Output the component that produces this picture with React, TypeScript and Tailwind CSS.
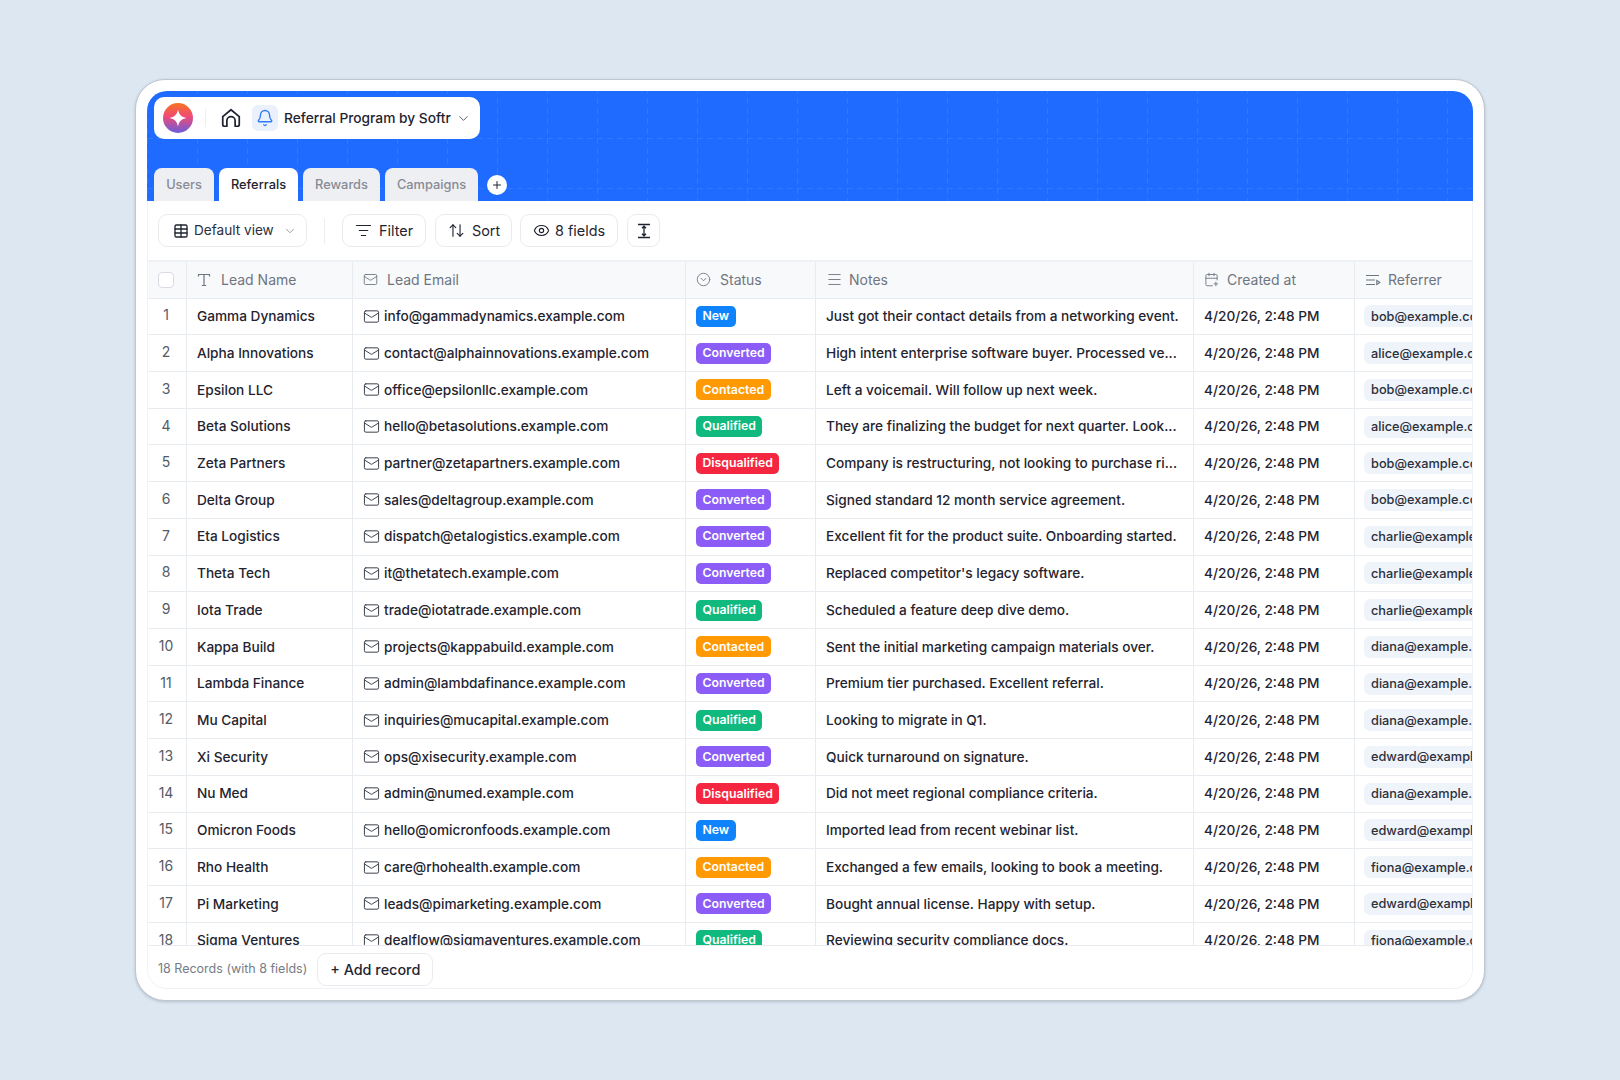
import {
  ArrowUpDown,
  Bell,
  CalendarPlus,
  ChevronDown,
  CircleChevronDown,
  Eye,
  ListFilter,
  Mail,
  Menu,
  Plus,
  Table,
} from "lucide-react";

type Status = "New" | "Converted" | "Contacted" | "Qualified" | "Disqualified";

const statusColors: Record<Status, string> = {
  New: "bg-[#0f83fb]",
  Converted: "bg-[#8b5cf6]",
  Contacted: "bg-[#ff9a05]",
  Qualified: "bg-[#10b97d]",
  Disqualified: "bg-[#f5263f]",
};

const rows: { name: string; email: string; status: Status; notes: string; referrer: string }[] = [
  { name: "Gamma Dynamics", email: "info@gammadynamics.example.com", status: "New", notes: "Just got their contact details from a networking event.", referrer: "bob@example.com" },
  { name: "Alpha Innovations", email: "contact@alphainnovations.example.com", status: "Converted", notes: "High intent enterprise software buyer. Processed ve...", referrer: "alice@example.com" },
  { name: "Epsilon LLC", email: "office@epsilonllc.example.com", status: "Contacted", notes: "Left a voicemail. Will follow up next week.", referrer: "bob@example.com" },
  { name: "Beta Solutions", email: "hello@betasolutions.example.com", status: "Qualified", notes: "They are finalizing the budget for next quarter. Look...", referrer: "alice@example.com" },
  { name: "Zeta Partners", email: "partner@zetapartners.example.com", status: "Disqualified", notes: "Company is restructuring, not looking to purchase ri...", referrer: "bob@example.com" },
  { name: "Delta Group", email: "sales@deltagroup.example.com", status: "Converted", notes: "Signed standard 12 month service agreement.", referrer: "bob@example.com" },
  { name: "Eta Logistics", email: "dispatch@etalogistics.example.com", status: "Converted", notes: "Excellent fit for the product suite. Onboarding started.", referrer: "charlie@example.com" },
  { name: "Theta Tech", email: "it@thetatech.example.com", status: "Converted", notes: "Replaced competitor's legacy software.", referrer: "charlie@example.com" },
  { name: "Iota Trade", email: "trade@iotatrade.example.com", status: "Qualified", notes: "Scheduled a feature deep dive demo.", referrer: "charlie@example.com" },
  { name: "Kappa Build", email: "projects@kappabuild.example.com", status: "Contacted", notes: "Sent the initial marketing campaign materials over.", referrer: "diana@example.com" },
  { name: "Lambda Finance", email: "admin@lambdafinance.example.com", status: "Converted", notes: "Premium tier purchased. Excellent referral.", referrer: "diana@example.com" },
  { name: "Mu Capital", email: "inquiries@mucapital.example.com", status: "Qualified", notes: "Looking to migrate in Q1.", referrer: "diana@example.com" },
  { name: "Xi Security", email: "ops@xisecurity.example.com", status: "Converted", notes: "Quick turnaround on signature.", referrer: "edward@example.com" },
  { name: "Nu Med", email: "admin@numed.example.com", status: "Disqualified", notes: "Did not meet regional compliance criteria.", referrer: "diana@example.com" },
  { name: "Omicron Foods", email: "hello@omicronfoods.example.com", status: "New", notes: "Imported lead from recent webinar list.", referrer: "edward@example.com" },
  { name: "Rho Health", email: "care@rhohealth.example.com", status: "Contacted", notes: "Exchanged a few emails, looking to book a meeting.", referrer: "fiona@example.com" },
  { name: "Pi Marketing", email: "leads@pimarketing.example.com", status: "Converted", notes: "Bought annual license. Happy with setup.", referrer: "edward@example.com" },
  { name: "Sigma Ventures", email: "dealflow@sigmaventures.example.com", status: "Qualified", notes: "Reviewing security compliance docs.", referrer: "fiona@example.com" },
];

const cols = "grid grid-cols-[39px_166px_333px_130px_378px_161px_119px]";
const cell = "flex items-center border-r border-[#e8ebef] pl-[10px] overflow-hidden whitespace-nowrap";
const headCell = "flex items-center border-r border-[#e8ebef] pl-[10px] text-[#6f7580]";
const btn = "flex items-center h-[33px] rounded-[9px] border border-[#e9ebef] bg-white text-[#1f2430]";

function Logo() {
  return (
    <svg width="30" height="30" viewBox="0 0 30 30">
      <defs>
        <linearGradient id="logo" x1="0.5" y1="0" x2="0.5" y2="1">
          <stop offset="0" stopColor="#f9731f" />
          <stop offset="0.45" stopColor="#ef4a78" />
          <stop offset="1" stopColor="#6a5cdc" />
        </linearGradient>
      </defs>
      <circle cx="15" cy="15" r="15" fill="url(#logo)" />
      <path d="M15 6.500c.9 5 3.500 7.600 8.500 8.500-5 .9-7.600 3.500-8.500 8.500-.9-5-3.500-7.600-8.500-8.500 5-.9 7.600-3.500 8.500-8.500z" fill="#fff" />
    </svg>
  );
}

function HomeIcon() {
  return (
    <svg width="22" height="22" viewBox="0 0 24 24" fill="none" stroke="#1f2430" strokeWidth="1.900" strokeLinejoin="round" strokeLinecap="round">
      <path d="M3 10.500 12 3l9 7.500V19a2 2 0 0 1-2 2h-2.500v-6a4.500 4.500 0 0 0-9 0v6H5a2 2 0 0 1-2-2z" />
    </svg>
  );
}

function SerifT() {
  return (
    <svg width="14" height="14" viewBox="0 0 14 14" fill="none" stroke="#6f7580" strokeWidth="1.200">
      <path d="M1.500 3.500V1.500h11v2M7 1.500v11M4.800 12.500h4.400" />
    </svg>
  );
}

function ReferrerIcon() {
  return (
    <svg width="16" height="14" viewBox="0 0 16 14" fill="none" stroke="#6f7580" strokeWidth="1.100">
      <path d="M1 2.500h13M1 7h9M1 11.500h9" />
      <path d="M11.800 7.500l3 2-3 2z" />
    </svg>
  );
}

function RowHeightIcon() {
  return (
    <svg width="16" height="16" viewBox="0 0 16 16" fill="none" stroke="#1f2430" strokeWidth="1.300">
      <path d="M2 1.500h12M2 14.500h12M8 3.500v9M6 5.200l2-2 2 2M6 10.800l2 2 2-2" />
    </svg>
  );
}

function BlueGrid() {
  return (
    <svg className="absolute inset-0 w-full h-full" aria-hidden="true">
      <defs>
        <pattern id="dash" width="50" height="50" patternUnits="userSpaceOnUse" y="47">
          <path d="M0.500 0V50M0 0.500H50" stroke="#ffffff" strokeOpacity="0.08" strokeDasharray="6 4" fill="none" />
        </pattern>
      </defs>
      <rect width="100%" height="100%" fill="url(#dash)" />
    </svg>
  );
}

function Tab({ label, active, width }: { label: string; active?: boolean; width: string }) {
  return (
    <div
      className={`flex items-center justify-center h-[33px] pt-[1px] rounded-t-[8px] text-[12.800px] font-medium ${width} ${
        active ? "bg-white text-[#1f2430]" : "bg-[#eeeff3] text-[#868b95]"
      }`}
    >
      {label}
    </div>
  );
}

export default function App() {
  return (
    <div className="w-[1620px] h-[1080px] bg-[#dce7f2] pt-[79px] pl-[135px] font-['Inter',sans-serif]">
      <div className="w-[1350px] h-[922px] bg-white rounded-[30px] border border-[#bfc6cc] shadow-[0_1px_3px_rgba(60,70,90,0.25)] p-[11px] flex flex-col">
        <div className="relative h-[110px] shrink-0 bg-[#1f6bff] rounded-t-[20px] overflow-hidden flex flex-col justify-between pl-[7px] pt-[6px]">
          <BlueGrid />
          <div className="relative w-[326px] h-[42px] bg-white rounded-[10px] flex items-center pl-[9px]">
            <Logo />
            <div className="w-px h-[18px] bg-[#eceef1] ml-[12px]" />
            <div className="ml-[14px]"><HomeIcon /></div>
            <div className="ml-[10px] w-[26px] h-[26px] rounded-[6px] bg-[#eaf0fc] flex items-center justify-center">
              <Bell size={18} color="#2f7bf6" strokeWidth={1.800} />
            </div>
            <span className="ml-[6px] text-[13.750px] font-medium text-[#1f2430] whitespace-nowrap">Referral Program by Softr</span>
            <ChevronDown size={15} color="#4b5563" strokeWidth={1.500} className="ml-[5px]" />
          </div>
          <div className="relative flex items-center gap-[5px]">
            <Tab label="Users" width="w-[60px]" />
            <Tab label="Referrals" active width="w-[79px]" />
            <Tab label="Rewards" width="w-[77px]" />
            <Tab label="Campaigns" width="w-[93px]" />
            <div className="ml-[4px] mb-[-1px] w-[20px] h-[20px] rounded-full bg-white flex items-center justify-center">
              <Plus size={12} color="#1f2430" strokeWidth={2} />
            </div>
          </div>
        </div>

        <div className="flex-1 min-h-0 flex flex-col border-x border-b border-[#f0f2f6] rounded-b-[20px] overflow-hidden">
          <div className="h-[59px] shrink-0 flex items-center pl-[10px] text-[14.400px]">
            <div className={`${btn} w-[149px] pl-[14px] gap-[5px]`}>
              <Table size={16} color="#1f2430" strokeWidth={2} />
              <span className="text-[13.600px] text-[#2b303a]">Default view</span>
              <ChevronDown size={14} color="#8a8f98" strokeWidth={1.500} className="ml-[4px]" />
            </div>
            <div className="w-px h-[26px] bg-[#eceef1] ml-[17px]" />
            <div className={`${btn} ml-[17px] w-[84px] pl-[12px] gap-[7px]`}>
              <ListFilter size={17} strokeWidth={1.600} />
              Filter
            </div>
            <div className={`${btn} ml-[9px] w-[77px] pl-[12px] gap-[7px]`}>
              <ArrowUpDown size={17} strokeWidth={1.600} />
              Sort
            </div>
            <div className={`${btn} ml-[8px] w-[98px] pl-[12px] gap-[5px]`}>
              <Eye size={17} strokeWidth={1.600} />
              8 fields
            </div>
            <div className={`${btn} ml-[9px] w-[33px] justify-center`}>
              <RowHeightIcon />
            </div>
          </div>

          <div className="flex-1 min-h-0 overflow-hidden text-[14px]">
            <div className={`${cols} h-[38.500px] bg-[#f8f9fb] border-t-2 border-t-[#eff1f4] border-b border-b-[#e8ebef]`}>
              <div className="flex items-center justify-center pr-[3px] border-r border-[#e8ebef]">
                <div className="w-[16px] h-[16px] rounded-[4px] border border-[#d9dce1] bg-white" />
              </div>
              <div className={`${headCell} gap-[10px]`}><SerifT /> Lead Name</div>
              <div className={`${headCell} gap-[9px]`}><Mail size={15} color="#6f7580" strokeWidth={1.400} /> Lead Email</div>
              <div className={`${headCell} gap-[9px]`}><CircleChevronDown size={15} color="#6f7580" strokeWidth={1.400} /> Status</div>
              <div className={`${headCell} gap-[6px]`}><Menu size={17} color="#6f7580" strokeWidth={1.300} /> Notes</div>
              <div className={`${headCell} gap-[8px]`}><CalendarPlus size={15} color="#6f7580" strokeWidth={1.400} /> Created at</div>
              <div className="flex items-center pl-[10px] gap-[7px] text-[#6f7580] overflow-hidden whitespace-nowrap"><ReferrerIcon /> Referrer</div>
            </div>
            {rows.map((row, i) => (
              <div key={row.name} className={`${cols} h-[36.730px] border-b border-[#e8ebef] text-[#1f2430] text-[13.650px] font-[450]`}>
                <div className="flex items-center justify-center pr-[2px] pb-[3px] border-r border-[#e8ebef] text-[#555b65] text-[14px] font-normal">{i + 1}</div>
                <div className={cell}>{row.name}</div>
                <div className={`${cell} gap-[4px]`}>
                  <Mail size={17} color="#3a404a" strokeWidth={1.400} className="shrink-0" />
                  {row.email}
                </div>
                <div className={cell}>
                  <span className={`px-[6.500px] h-[21px] flex items-center rounded-[5px] text-white text-[12.250px] font-semibold ${statusColors[row.status]}`}>
                    {row.status}
                  </span>
                </div>
                <div className={cell}>{row.notes}</div>
                <div className={cell}>4/20/26, 2:48 PM</div>
                <div className="flex items-center pl-[9px] overflow-hidden whitespace-nowrap">
                  <span className="px-[7px] h-[22px] flex items-center rounded-[6px] bg-[#eff3fa] text-[12.750px] font-medium text-[#2b303a]">
                    {row.referrer}
                  </span>
                </div>
              </div>
            ))}
          </div>

          <div className="h-[43px] shrink-0 flex items-center pl-[10px] pt-[5px] border-t border-[#e8ebef] bg-white">
            <span className="text-[12.500px] text-[#767c86]">18 Records (with 8 fields)</span>
            <div className={`${btn} ml-[10px] w-[116px] justify-center text-[14.400px] font-medium`}>+ Add record</div>
          </div>
        </div>
      </div>
    </div>
  );
}
